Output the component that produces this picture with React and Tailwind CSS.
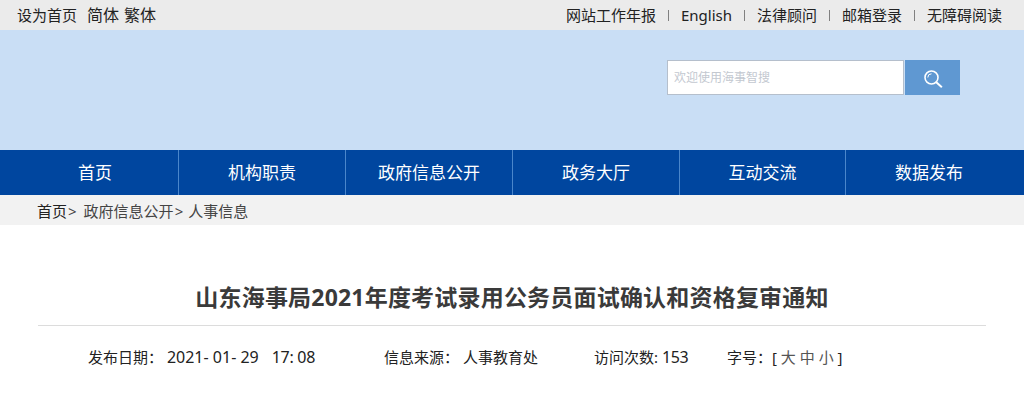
import React from "react";

const font = { fontFamily: '"Noto Sans", "Noto Sans CJK SC", sans-serif' };
const nav = ["首页", "机构职责", "政府信息公开", "政务大厅", "互动交流", "数据发布"];
const links = ["网站工作年报", "English", "法律顾问", "邮箱登录", "无障碍阅读"];

export default function App() {
  return (
    <div style={font} className="w-[1024px] h-[400px] overflow-hidden bg-white text-[#333]">
      <div className="h-[30px] bg-[#ebebeb] flex items-center justify-between pl-[17px] pr-[22px] text-[15px] text-[#222]">
        <div className="flex items-center">
          <span>设为首页</span>
          <span className="ml-[10px] text-[16px]">简体</span>
          <span className="ml-[5px] text-[16px]">繁体</span>
        </div>
        <div className="flex items-center">
          {links.map((l, i) => (
            <React.Fragment key={l}>
              {i > 0 && <span className="mx-[12px] w-px h-[11px] bg-[#808080]" />}
              <span>{l}</span>
            </React.Fragment>
          ))}
        </div>
      </div>
      <div className="h-[120px] bg-[#c9def5] flex justify-end items-start pt-[30px] pr-[64px]">
        <div className="w-[237px] h-[35px] bg-white border border-[#b5bfcc] flex items-center pl-[6px] text-[12px] text-[#c3c8d0]">欢迎使用海事智搜</div>
        <div className="ml-px w-[55px] h-[35px] bg-[#5f98d2] flex items-center justify-center">
          <svg width="20" height="20" viewBox="0 0 20 20" fill="none" stroke="#fff" strokeWidth="1.6">
            <circle cx="8.5" cy="9.5" r="6.5" />
            <path d="M4.8 9.5a3.7 3.7 0 0 1 3.7-3.7" strokeWidth="1" />
            <path d="M13.3 14.3l5 4.4" strokeWidth="2" strokeLinecap="round" />
          </svg>
        </div>
      </div>
      <div className="h-[45px] bg-[#00469f]">
        <div className="ml-[12px] w-[1000px] grid grid-cols-[167px_167px_167px_167px_166px_1fr] h-full">
          {nav.map((n, i) => (
            <div key={n} className={`flex items-center justify-center text-[17px] text-white border-[#4a86cb] ${i < 5 ? "border-r" : ""}`}>{n}</div>
          ))}
        </div>
      </div>
      <div className="h-[30px] bg-[#f2f2f2] pl-[37px] pt-[3px] flex items-center text-[15px] text-[#444]">
        <span className="text-[#222]">首页</span>
        <span className="ml-px">&gt;</span>
        <span className="ml-[7px]">政府信息公开</span>
        <span className="ml-px">&gt;</span>
        <span className="ml-[5px]">人事信息</span>
      </div>
      <div className="mx-[38px] mt-[54px] pb-[10px] border-b border-[#dcdcdc] text-center text-[23px] tracking-[0.2px] leading-[36px] font-bold text-[#3a3a3a]">
        山东海事局2021年度考试录用公务员面试确认和资格复审通知
      </div>
      <div className="mt-[19px] pl-[88px] flex items-baseline text-[15px] leading-[24px] text-[#222]">
        <span className="w-[296px] whitespace-pre">发布日期： <span className="text-[16px]">2021- 01- 29</span><span className="ml-[13px] text-[16px] tracking-[-0.3px]">17: 08</span></span>
        <span className="w-[210px] whitespace-pre">信息来源： 人事教育处</span>
        <span className="w-[133px] whitespace-pre">访问次数: <span className="text-[16px] tracking-[-0.4px]">153</span></span>
        <span className="whitespace-pre">字号：[ <span className="text-[#555]">大 中 小</span> ]</span>
      </div>
    </div>
  );
}
